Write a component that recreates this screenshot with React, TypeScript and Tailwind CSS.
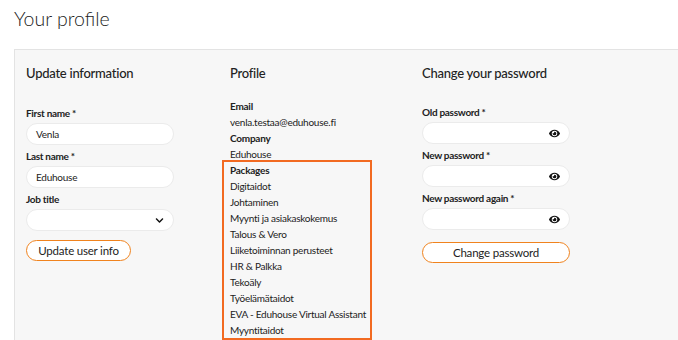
import { FaEye, FaChevronDown } from "react-icons/fa"

const packages = [
    "Digitaidot",
    "Johtaminen",
    "Myynti ja asiakaskokemus",
    "Talous & Vero",
    "Liiketoiminnan perusteet",
    "HR & Palkka",
    "Tekoäly",
    "Työelämätaidot",
    "EVA - Eduhouse Virtual Assistant",
    "Myyntitaidot",
]

const TextInput = ({ value }: { value?: string }) => (
    <div className="flex items-center h-[22px] w-[148px] rounded-full bg-white border border-[#ebebeb] px-[9px] text-[10px] tracking-[-0.25px] text-[#222]">
        {value}
    </div>
)

const PasswordInput = () => (
    <div className="flex items-center justify-end h-[22px] w-[148px] rounded-full bg-white border border-[#ebebeb] pr-[9px]">
        <FaEye className="w-[11px] h-[11px] text-[#111]" />
    </div>
)

const Label = ({ children, className = "" }: { children: string; className?: string }) => (
    <div className={`h-4 leading-4 text-[10px] tracking-[-0.3px] font-bold text-[#222] ${className}`}>{children}</div>
)

const Heading = ({ children }: { children: string }) => (
    <h2 className="h-4 leading-4 text-[13px] tracking-[-0.25px] font-medium text-[#222]">{children}</h2>
)

export default function App() {
    return (
        <div className="w-[678px] h-[340px] overflow-hidden bg-white font-['Lato',sans-serif]">
            <h1 className="pl-[14px] pt-[5px] h-[49px] text-[19.5px] leading-[28px] font-light text-[#222]">Your profile</h1>

            <div className="ml-[14px] h-[300px] bg-[#f7f7f7] border-l border-t border-[#e3e3e3] pl-[11px] pt-[15px] grid grid-cols-[204px_192px_1fr]">
                <section className="flex flex-col">
                    <Heading>Update information</Heading>
                    <Label className="mt-6">First name *</Label>
                    <div className="mt-[2px]"><TextInput value="Venla" /></div>
                    <Label className="mt-[3px]">Last name *</Label>
                    <div className="mt-[2px]"><TextInput value="Eduhouse" /></div>
                    <Label className="mt-[3px]">Job title</Label>
                    <div className="mt-[2px] flex items-center justify-end h-[22px] w-[148px] rounded-full bg-white border border-[#ebebeb] pr-[9px]">
                        <FaChevronDown className="w-[9px] h-[9px] text-[#111]" />
                    </div>
                    <button className="mt-[9px] h-[21px] w-[105px] rounded-full border-[1.5px] border-[#f0831e] bg-white text-[11.5px] tracking-[-0.2px] text-[#222]">
                        Update user info
                    </button>
                </section>

                <section className="flex flex-col text-[10px] leading-4 tracking-[-0.25px] text-[#222] whitespace-nowrap">
                    <Heading>Profile</Heading>
                    <div className="mt-[17px] font-bold">Email</div>
                    <div>venla.testaa@eduhouse.fi</div>
                    <div className="font-bold">Company</div>
                    <div>Eduhouse</div>
                    <div className="-mt-[2px] -ml-[8px] w-[150px] border-2 border-[#f26a21] pl-[6px]">
                        <div className="font-bold">Packages</div>
                        {packages.map((p) => (
                            <div key={p}>{p}</div>
                        ))}
                    </div>
                </section>

                <section className="flex flex-col">
                    <Heading>Change your password</Heading>
                    <Label className="mt-[23px]">Old password *</Label>
                    <div className="mt-[2px]"><PasswordInput /></div>
                    <Label className="mt-[3px]">New password *</Label>
                    <div className="mt-[2px]"><PasswordInput /></div>
                    <Label className="mt-[3px]">New password again *</Label>
                    <div className="mt-[2px]"><PasswordInput /></div>
                    <button className="mt-[12px] h-[21px] w-[148px] rounded-full border-[1.5px] border-[#f0831e] bg-white text-[11.5px] tracking-[-0.2px] text-[#222]">
                        Change password
                    </button>
                </section>
            </div>
        </div>
    )
}
